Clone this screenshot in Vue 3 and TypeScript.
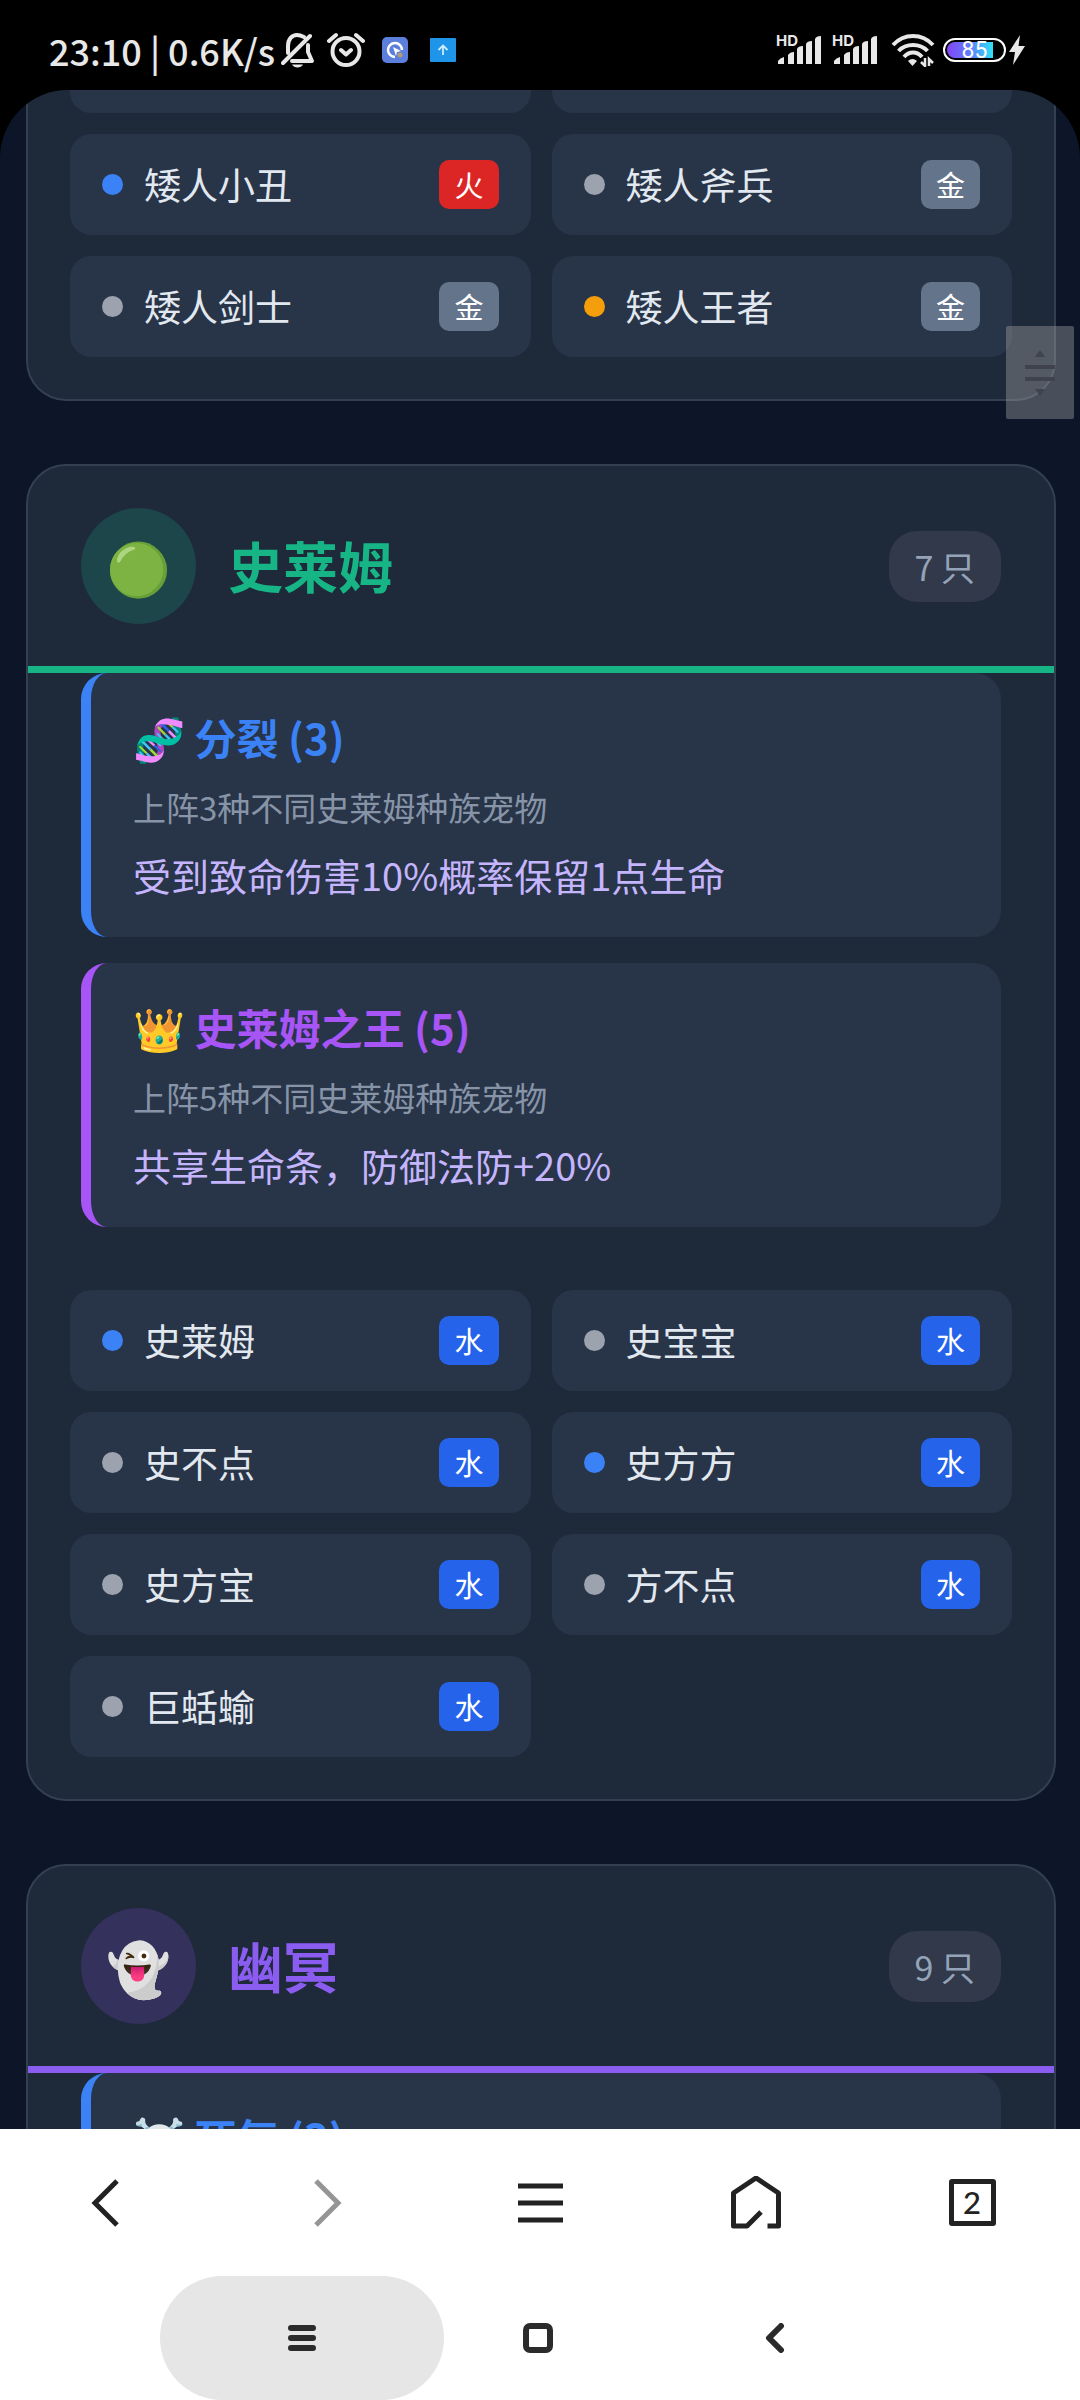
<script setup lang="ts">
interface Pet {
  name: string
  rarity: 'rare' | 'common' | 'legend' | ''
  element: '火' | '金' | '水' | ''
}

interface Bond {
  icon: string
  title: string
  tone: 'blue' | 'purple'
  need?: string
  effect?: string
}

interface Race {
  name: string
  icon: string
  count: string
  tone: 'slime' | 'ghost'
  bonds: Bond[]
  pets: Pet[]
}

const dwarves: Pet[] = [
  { name: '', rarity: '', element: '' },
  { name: '', rarity: '', element: '' },
  { name: '矮人小丑', rarity: 'rare', element: '火' },
  { name: '矮人斧兵', rarity: 'common', element: '金' },
  { name: '矮人剑士', rarity: 'common', element: '金' },
  { name: '矮人王者', rarity: 'legend', element: '金' },
]

const races: Race[] = [
  {
    name: '史莱姆',
    icon: '🟢',
    count: '7 只',
    tone: 'slime',
    bonds: [
      { icon: '🧬', title: '分裂 (3)', tone: 'blue', need: '上阵3种不同史莱姆种族宠物', effect: '受到致命伤害10%概率保留1点生命' },
      { icon: '👑', title: '史莱姆之王 (5)', tone: 'purple', need: '上阵5种不同史莱姆种族宠物', effect: '共享生命条，防御法防+20%' },
    ],
    pets: [
      { name: '史莱姆', rarity: 'rare', element: '水' },
      { name: '史宝宝', rarity: 'common', element: '水' },
      { name: '史不点', rarity: 'common', element: '水' },
      { name: '史方方', rarity: 'rare', element: '水' },
      { name: '史方宝', rarity: 'common', element: '水' },
      { name: '方不点', rarity: 'common', element: '水' },
      { name: '巨蛞蝓', rarity: 'common', element: '水' },
    ],
  },
  {
    name: '幽冥',
    icon: '👻',
    count: '9 只',
    tone: 'ghost',
    bonds: [{ icon: '☠️', title: '死气 (3)', tone: 'blue' }],
    pets: [],
  },
]

const elementClass: Record<string, string> = { 火: 'fire', 金: 'metal', 水: 'water' }
</script>

<template>
  <div class="phone">
    <header class="status">
      <div class="status-left">
        <span class="clock">23:10 | 0.6K/s</span>
        <svg class="bell" width="34" height="36" viewBox="0 0 34 36" fill="none" stroke="#e8e8e8" stroke-width="4" stroke-linecap="round" stroke-linejoin="round">
          <path d="M7 21V14C7 7 11 3 16 3C19 3 21 4 23 5" />
          <path d="M29 4L2 31" />
          <path d="M27 13V20L31 29H11" />
          <path d="M11 32.500H22C20 36.500 13 36.500 11 32.500Z" fill="#e8e8e8" stroke="none" />
        </svg>
        <svg class="alarm" width="38" height="36" viewBox="0 0 38 36" fill="none" stroke="#e8e8e8" stroke-width="4" stroke-linecap="round" stroke-linejoin="round">
          <circle cx="19" cy="19.500" r="13.500" />
          <path d="M2 9L9 3M36 9L29 3M14 18L19 22.500L24 18" />
        </svg>
        <svg class="app" width="26" height="26" viewBox="0 0 26 26">
          <rect width="26" height="26" rx="5" fill="#5b7fdb" />
          <path d="M13 20A7 7 0 1 1 20 13" fill="none" stroke="#fff" stroke-width="2.500" />
          <path d="M11 10L19 14L15 15L14 19Z" fill="#fff" />
          <circle cx="18" cy="18" r="2.500" fill="#b39b7c" />
        </svg>
        <svg class="up" width="26" height="26" viewBox="0 0 26 26" fill="none">
          <rect y="1" width="26" height="24" rx="1" fill="#1f95ea" />
          <path d="M13 18V9M8.500 13L13 8.500L17.500 13" stroke="#cdeaff" stroke-width="1.800" />
        </svg>
      </div>
      <div class="status-right">
        <span v-for="n in 2" :key="n" class="signal">
          <span class="hd">HD</span>
          <svg width="46" height="30" viewBox="0 0 46 30" fill="#e8e8e8">
            <path d="M2 29V26Q4 23 8 22V29ZM12 29V20Q14 17 18 17V29ZM21 29V14Q22 11 27 11V29ZM30 29V9Q31 6 36 6V29ZM39 29V4Q40 1 45 1V29Z" />
          </svg>
        </span>
        <svg class="wifi" width="44" height="34" viewBox="0 0 44 34" fill="none" stroke="#e8e8e8" stroke-width="4">
          <path d="M2 12C13 0 31 0 42 12M7.500 18C15 10 29 10 36.500 18M13 24C18 18 26 18 31 24" />
          <path d="M17 28Q21.500 24 26 28L21.500 33Z" fill="#e8e8e8" stroke="none" />
          <path d="M34 25V33L30 29M38 33V26L42 30" stroke-width="2.500" />
        </svg>
        <span class="battery"><span class="level"></span><span class="percent">85</span></span>
        <svg class="bolt" width="18" height="30" viewBox="0 0 18 30" fill="#e8e8e8">
          <path d="M12 0L1 17H7L5 30L17 11H10.500Z" />
        </svg>
      </div>
    </header>

    <main class="page">
      <section class="card continued">
        <ul class="pets">
          <li v-for="(pet, i) in dwarves" :key="i" class="pet">
            <template v-if="pet.name">
              <span class="dot" :class="pet.rarity"></span>
              <span class="pet-name">{{ pet.name }}</span>
              <span class="element" :class="elementClass[pet.element]">{{ pet.element }}</span>
            </template>
          </li>
        </ul>
      </section>

      <section v-for="race in races" :key="race.name" class="card" :class="race.tone">
        <header class="card-head">
          <span class="avatar">{{ race.icon }}</span>
          <h2>{{ race.name }}</h2>
          <span class="count">{{ race.count }}</span>
        </header>
        <div class="bonds">
          <article v-for="bond in race.bonds" :key="bond.title" class="bond" :class="bond.tone">
            <h3>{{ bond.icon }} {{ bond.title }}</h3>
            <p v-if="bond.need" class="need">{{ bond.need }}</p>
            <p v-if="bond.effect" class="effect">{{ bond.effect }}</p>
          </article>
        </div>
        <ul v-if="race.pets.length" class="pets">
          <li v-for="pet in race.pets" :key="pet.name" class="pet">
            <span class="dot" :class="pet.rarity"></span>
            <span class="pet-name">{{ pet.name }}</span>
            <span class="element" :class="elementClass[pet.element]">{{ pet.element }}</span>
          </li>
        </ul>
      </section>

      <button class="scroller" type="button" aria-label="滚动">
        <svg width="30" height="48" viewBox="0 0 30 48" fill="#3f4350">
          <path d="M15 1L20 8H10Z" />
          <rect y="16" width="30" height="4" />
          <rect y="28" width="30" height="4" />
          <path d="M15 47L20 40H10Z" />
        </svg>
      </button>
    </main>

    <footer class="bottom">
      <nav class="toolbar">
        <button type="button" aria-label="后退">
          <svg width="54" height="54" viewBox="0 0 54 54"><path d="M36 5L14 27L36 49" /></svg>
        </button>
        <button type="button" aria-label="前进" class="muted">
          <svg width="54" height="54" viewBox="0 0 54 54"><path d="M19 5L41 27L19 49" /></svg>
        </button>
        <button type="button" aria-label="菜单">
          <svg width="54" height="54" viewBox="0 0 54 54"><path d="M5 10H50M5 27H50M5 44H50" /></svg>
        </button>
        <button type="button" aria-label="主页">
          <svg width="54" height="54" viewBox="0 0 54 54" stroke-linejoin="round"><path d="M32 36L18 50H4.500V17L27 2L49.500 17V50H38.500" /></svg>
        </button>
        <button type="button" aria-label="标签页">
          <span class="tabs">2</span>
        </button>
      </nav>
      <nav class="system">
        <button type="button" aria-label="最近任务" class="pressed">
          <svg width="30" height="30" viewBox="0 0 30 30" stroke-linecap="round"><path d="M4 5H26M4 15H26M4 25H26" /></svg>
        </button>
        <button type="button" aria-label="桌面">
          <svg width="30" height="30" viewBox="0 0 30 30"><rect x="3" y="3" width="24" height="24" rx="4" /></svg>
        </button>
        <button type="button" aria-label="返回">
          <svg width="30" height="30" viewBox="0 0 30 30" stroke-linecap="round" stroke-linejoin="round"><path d="M22 3L10 15L22 27" /></svg>
        </button>
      </nav>
    </footer>
  </div>
</template>

<style>
body {
  margin: 0;
  background: #000;
}
</style>

<style scoped>
.phone {
  display: flex;
  flex-direction: column;
  height: 100vh;
  overflow: hidden;
  background: #000;
  font-family: "Noto Sans CJK SC", "Noto Sans", sans-serif;
  line-height: 1.6;
}

button {
  padding: 0;
  border: 0;
  background: none;
  font: inherit;
}

svg {
  display: block;
  flex: none;
}

/* status bar */
.status {
  display: flex;
  justify-content: space-between;
  align-items: center;
  flex: none;
  height: 90px;
  padding: 10px 54px 0 49px;
  box-sizing: border-box;
  color: #e8e8e8;
}

.status-left,
.status-right {
  display: flex;
  align-items: center;
}

.clock {
  font-size: 36px;
  font-weight: 500;
  line-height: 40px;
}

.bell { margin-left: 6px; }
.alarm { margin-left: 12px; }
.app { margin-left: 17px; }
.up { margin-left: 22px; }

.signal {
  position: relative;
  margin-right: 10px;
}

.hd {
  position: absolute;
  top: 0;
  left: 0;
  font: 700 15px/12px "Inter", sans-serif;
}

.wifi { margin: 0 8px 0 3px; }

.battery {
  position: relative;
  display: flex;
  align-items: center;
  width: 63px;
  height: 24px;
  padding: 2px;
  box-sizing: border-box;
  border: 2px solid #fff;
  border-radius: 12px;
}

.level {
  width: 84%;
  height: 100%;
  border-radius: 8px 0 0 8px;
  background: linear-gradient(90deg, #8445f5, #5f7dfb 50%, #2de2f5);
}

.percent {
  position: absolute;
  inset: 0;
  font: 400 23px/22px "Roboto", sans-serif;
  color: #fff;
  text-align: center;
}

.bolt { margin-left: 2px; }

/* page */
.page {
  position: relative;
  flex: 1;
  min-height: 0;
  padding: 0 24px 0 26px;
  overflow: hidden;
  border-radius: 68px 68px 0 0;
  background: #0d1628;
}

.card {
  margin-bottom: 63px;
  border: 2px solid #334052;
  border-radius: 40px;
  background: #1e293a;
}

.continued {
  margin-top: -78px;
  border-top: 0;
  border-radius: 0 0 40px 40px;
}

.slime { --tone: #17b585; --tint: #1c4649; }
.ghost { --tone: #8b5cf0; --tint: #34315c; }

.card-head {
  display: flex;
  align-items: center;
  gap: 32px;
  padding: 42px 53px;
  border-bottom: 7px solid var(--tone);
}

.avatar {
  display: flex;
  align-items: center;
  justify-content: center;
  width: 115px;
  height: 116px;
  border-radius: 50%;
  background: var(--tint);
  font-size: 52px;
}

h2 {
  flex: 1;
  margin: 0;
  padding-bottom: 4px;
  font-size: 55px;
  font-weight: 700;
  line-height: 88px;
  color: var(--tone);
}

.count {
  padding: 8px 26px;
  border-radius: 28px;
  background: #31394b;
  font-size: 34px;
  line-height: 55px;
  color: #94a3b8;
}

.bonds {
  display: flex;
  flex-direction: column;
  gap: 26px;
  padding: 0 53px;
}

.bond {
  padding: 32px 42px;
  border-left: 10px solid var(--bond);
  border-radius: 26px;
  background: #283447;
}

.bond.blue { --bond: #3b82f6; }
.bond.purple { --bond: #a855f7; }

.bond > * { margin: 0; }

h3 {
  font-size: 42px;
  font-weight: 700;
  line-height: 64px;
  color: var(--bond);
}

.bond > .need {
  margin: 12px 0 11px;
  font-size: 33px;
  line-height: 53px;
  color: #8794a8;
}

.effect {
  font-size: 38px;
  line-height: 60px;
  color: #c4b5fd;
}

.pets {
  display: grid;
  grid-template-columns: 1fr 1fr;
  gap: 21px;
  margin: 0;
  padding: 0 42px 42px;
  list-style: none;
}

.bonds + .pets { padding-top: 63px; }

.pet {
  display: flex;
  align-items: center;
  gap: 21px;
  min-height: 101px;
  padding: 21px 32px;
  box-sizing: border-box;
  border-radius: 21px;
  background: #283447;
}

.dot {
  width: 21px;
  height: 21px;
  border-radius: 50%;
}

.rare { background: #3b82f6; }
.common { background: #9ca3af; }
.legend { background: #f59e0b; }

.pet-name {
  flex: 1;
  font-size: 37px;
  line-height: 59px;
  color: #e2e8f0;
}

.element {
  padding: 0 15px;
  border-radius: 10px;
  font-size: 29px;
  line-height: 49px;
  color: #fff;
}

.fire { background: #dc2626; }
.metal { background: #64748b; }
.water { background: #2563eb; }

.scroller {
  position: absolute;
  top: 236px;
  right: 6px;
  display: flex;
  align-items: center;
  justify-content: center;
  width: 68px;
  height: 93px;
  border-radius: 2px;
  background: rgba(165, 165, 165, 0.4);
}

/* browser and system bars */
.bottom {
  flex: none;
  background: #fff;
}

.bottom svg {
  fill: none;
  stroke: #222;
  stroke-width: 5px;
}

.toolbar {
  display: grid;
  grid-template-columns: repeat(5, 1fr);
  height: 147px;
}

.toolbar button {
  display: flex;
  align-items: center;
  justify-content: center;
  color: #222;
}

.toolbar .muted svg { stroke: #959595; }

.tabs {
  width: 47px;
  height: 47px;
  box-sizing: border-box;
  border: 5px solid #222;
  border-radius: 3px;
  font: 500 31px/37px "Lato", sans-serif;
}

.system {
  display: grid;
  grid-template-columns: 3fr 2fr 3fr;
  height: 124px;
  padding: 0 164px 0 160px;
}

.system button {
  display: flex;
  align-items: center;
  justify-content: center;
  border-radius: 62px;
}

.bottom .system svg {
  stroke: #2b2b2b;
  stroke-width: 6px;
}

.pressed { background: #e6e6e6; }
</style>
